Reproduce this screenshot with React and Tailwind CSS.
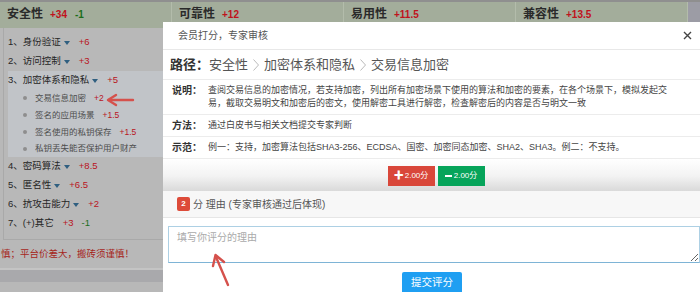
import React from "react";

const FONT = { fontFamily: '"Liberation Sans", "Noto Sans CJK SC", sans-serif' };

const Caret = () => (
  <span className="inline-block ml-[3px] w-0 h-0 border-l-[3px] border-r-[3px] border-t-[4px] border-l-transparent border-r-transparent border-t-[#2f5f80]" />
);

const Chevron = () => (
  <svg width="8" height="14" viewBox="0 0 8 14" className="mx-[4px]">
    <polyline points="1.5,1.5 6.5,7 1.5,12.5" fill="none" stroke="#bbb" strokeWidth="1" />
  </svg>
);

const headerCols = [
  { name: "安全性", plus: "+34", minus: "-1" },
  { name: "可靠性", plus: "+12" },
  { name: "易用性", plus: "+11.5" },
  { name: "兼容性", plus: "+13.5" },
];

const subItems = [
  { name: "交易信息加密", score: "+2" },
  { name: "签名的应用场景", score: "+1.5" },
  { name: "签名使用的私钥保存", score: "+1.5" },
  { name: "私钥丢失能否保护用户财产" },
];

const lowerItems = [
  { name: "4、密码算法", score: "+8.5", caret: true },
  { name: "5、匿名性", score: "+6.5", caret: true },
  { name: "6、抗攻击能力", score: "+2", caret: true },
  { name: "7、(+)其它", score: "+3", minus: "-1" },
];

const ListItem = ({ name, score, minus, caret }) => (
  <div className="h-[19px] flex items-center text-[9.5px] text-[#262626]">
    <span>{name}</span>
    {caret && <Caret />}
    {score && <span className="ml-[9px] text-[#b8141c]">{score}</span>}
    {minus && <span className="ml-[8px] text-[#1d6e1d]">{minus}</span>}
  </div>
);

const rows = [
  {
    label: "说明：",
    lines: [
      "查阅交易信息的加密情况，若支持加密，列出所有加密场景下使用的算法和加密的要素，在各个场景下，模拟发起交",
      "易，截取交易明文和加密后的密文，使用解密工具进行解密，检查解密后的内容是否与明文一致",
    ],
  },
  { label: "方法：", lines: ["通过白皮书与相关文档提交专家判断"] },
  {
    label: "示范：",
    lines: ["例一：支持，加密算法包括SHA3-256、ECDSA、国密、加密同态加密、SHA2、SHA3。例二：不支持。"],
  },
];

export default function App() {
  return (
    <div className="relative w-[700px] h-[292px] overflow-hidden bg-[#b8b8b8]" style={FONT}>
      {/* dimmed page behind */}
      <div className="h-[2px] bg-[#8f8f8f]" />
      <div className="flex h-[26px] bg-[#a3ad9b]">
        {headerCols.map((c, i) => (
          <div
            key={c.name}
            className={`w-[172px] flex items-center pl-[7px] pb-[2px] border-r border-[#b3bcab] ${i === 2 ? "w-[171px]" : ""}`}
          >
            <span className="text-[12px] font-semibold text-[#2a2a2a]">{c.name}</span>
            <span className="ml-[7px] text-[10px] font-bold text-[#c0121c]">{c.plus}</span>
            {c.minus && <span className="ml-[8px] text-[10px] font-bold text-[#1b6d1b]">{c.minus}</span>}
          </div>
        ))}
        <div className="flex-1 bg-[#9c9ca5]" />
      </div>

      <div className="ml-[3px] w-[200px] h-[212px] border-l border-b border-[#a9a9a9] pt-[5px] pl-[4px]">
        <ListItem name="1、身份验证" score="+6" caret />
        <ListItem name="2、访问控制" score="+3" caret />
        <div className="bg-[#c1c4c8] h-[86px]">
          <ListItem name="3、加密体系和隐私" score="+5" caret />
          {subItems.map((s) => (
            <div key={s.name} className="h-[16.75px] flex items-center text-[8.5px] text-[#4d4d4d]">
              <span className="ml-[15px] mr-[8px] w-[4px] h-[4px] rounded-full bg-[#8e8e8e]" />
              <span>{s.name}</span>
              {s.score && <span className="ml-[8px] text-[#b8141c]">{s.score}</span>}
            </div>
          ))}
        </div>
        {lowerItems.map((it) => (
          <ListItem key={it.name} {...it} />
        ))}
      </div>

      <div className="h-[28px] flex items-center pl-[1px] text-[9.5px] text-[#a6261c] whitespace-nowrap">
        慎；平台价差大，搬砖须谨慎！
      </div>
      <div className="h-[2px] bg-[#c4c4c4]" />
      <div className="h-[12px] bg-[#a9a9ac]" />

      {/* scoring modal */}
      <div className="absolute left-[163px] top-[22px] w-[540px] h-[170px] bg-white">
        <div className="h-[28px] flex items-center justify-between pl-[15px] pr-[11px] border-b border-[#e8e8e8] text-[10px] text-[#555]">
          <span>会员打分，专家审核</span>
          <svg width="9" height="9" viewBox="0 0 9 9">
            <path d="M1 1L8 8M8 1L1 8" stroke="#444" strokeWidth="1.4" />
          </svg>
        </div>
        <div className="h-[30px] flex items-center pl-[7px] border-b border-[#ececec] text-[13px] text-[#555]">
          <span className="font-bold text-[#333]">路径：</span>
          <span>安全性</span>
          <Chevron />
          <span>加密体系和隐私</span>
          <Chevron />
          <span>交易信息加密</span>
        </div>
        {rows.map((r) => (
          <div key={r.label} className="flex pl-[9px] py-[4px] border-b border-[#ececec] text-[9px] leading-[13px] text-[#444]">
            <span className="w-[36px] shrink-0 text-[10px] font-bold text-[#333]">{r.label}</span>
            <div className="flex flex-col whitespace-nowrap">
              {r.lines.map((l) => (
                <span key={l}>{l}</span>
              ))}
            </div>
          </div>
        ))}
        <div className="h-[34px] bg-gradient-to-b from-white via-[#f3f3f3] to-[#d6d6d6] flex justify-center gap-[3px] pt-[7px] pl-[6px]">
          <button className="w-[47px] h-[20px] bg-[#d9473a] text-white text-[8px] flex items-center justify-center gap-[1px]">
            <span className="text-[10px] font-bold leading-none">✚</span>2.00分
          </button>
          <button className="w-[47px] h-[20px] bg-[#06a45a] text-white text-[8px] flex items-center justify-center gap-[2px]">
            <span className="w-[7px] h-[2px] bg-white" />2.00分
          </button>
        </div>
      </div>

      {/* reason panel */}
      <div className="absolute left-[163px] top-[191px] w-[540px] h-[110px] bg-white">
        <div className="h-[27px] flex items-center pl-[14px] bg-[#f7f7f7] border-b border-[#e6e6e6] text-[10px] text-[#555]">
          <span className="w-[13px] h-[14px] rounded-[2px] bg-[#dd4b39] text-white text-[8px] font-bold flex items-center justify-center">2</span>
          <span className="ml-[3px]">分 理由 (专家审核通过后体现)</span>
        </div>
        <div className="pl-[5px] pt-[8px]">
          <textarea
            readOnly
            placeholder="填写你评分的理由"
            className="block w-[532px] h-[37px] border border-[#add0e4] border-b-[#7eb4d6] px-[8px] py-[4px] text-[10px] leading-[14px] placeholder:text-[#aaa] outline-none"
            style={FONT}
          />
        </div>
        <div className="flex justify-center mt-[9px] pr-[2px]">
          <button className="w-[60px] h-[22px] rounded-[2px] bg-[#1f9ff2] text-white text-[10.5px]">提交评分</button>
        </div>
      </div>

      {/* annotation arrows */}
      <svg className="absolute left-0 top-0 pointer-events-none" width="700" height="292">
        <g stroke="#d5514c" strokeWidth="2.4" fill="none" strokeLinecap="round" strokeLinejoin="round">
          <path d="M133 100H109" />
          <path d="M116 95L108 100L116 105" />
          <path d="M228 285L216 257" />
          <path d="M213 266L215.5 255L224 262" />
        </g>
      </svg>
    </div>
  );
}
